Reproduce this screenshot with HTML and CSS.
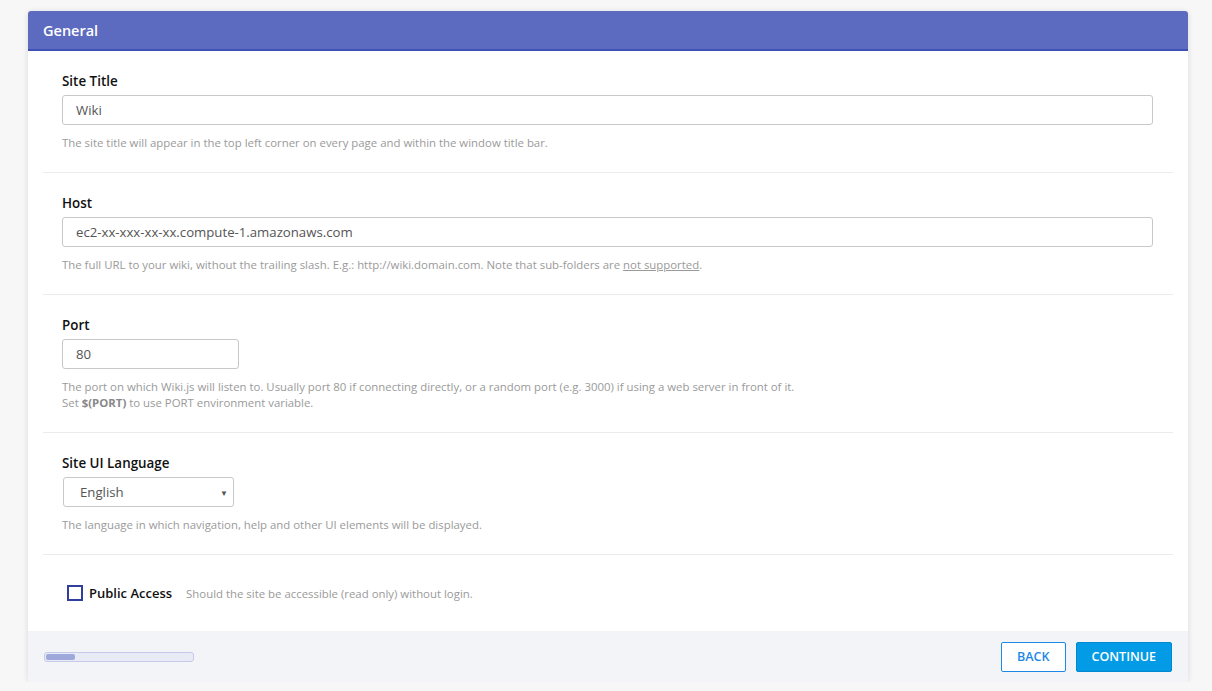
FILE: index.html
```html
<!DOCTYPE html>
<html lang="en">
<head>
    <meta charset="UTF-8">
    <meta name="viewport" content="width=device-width, initial-scale=1.0">
    <title>Wiki.js Setup - General</title>
    <link rel="stylesheet" href="styles.css">
</head>
<body>
    <div class="panel">
        <div class="panel-title">General</div>

        <div class="panel-content">
            <section class="field">
                <label class="field-label">Site Title</label>
                <input class="input" type="text" value="Wiki">
                <p class="help">The site title will appear in the top left corner on every page and within the window title bar.</p>
            </section>

            <section class="field">
                <label class="field-label">Host</label>
                <input class="input" type="text" value="ec2-xx-xxx-xx-xx.compute-1.amazonaws.com">
                <p class="help">The full URL to your wiki, without the trailing slash. E.g.: http://wiki.domain.com. Note that sub-folders are <u>not supported</u>.</p>
            </section>

            <section class="field">
                <label class="field-label">Port</label>
                <input class="input input-small" type="text" value="80">
                <p class="help">The port on which Wiki.js will listen to. Usually port 80 if connecting directly, or a random port (e.g. 3000) if using a web server in front of it.<br>
                Set <strong>$(PORT)</strong> to use PORT environment variable.</p>
            </section>

            <section class="field">
                <label class="field-label">Site UI Language</label>
                <div class="select">
                    <span>English</span>
                    <span class="caret">&#9660;</span>
                </div>
                <p class="help">The language in which navigation, help and other UI elements will be displayed.</p>
            </section>

            <section class="field field-check">
                <span class="checkbox"></span>
                <span class="check-label">Public Access</span>
                <span class="check-help">Should the site be accessible (read only) without login.</span>
            </section>
        </div>

        <div class="panel-footer">
            <div class="progress"><div class="progress-bar" style="width: 20%"></div></div>
            <div class="actions">
                <button class="btn btn-outline">Back</button>
                <button class="btn btn-primary">Continue</button>
            </div>
        </div>
    </div>
</body>
</html>
```

FILE: styles.css
```css
body {
    margin: 0;
    padding: 11px 24px 0 28px;
    background-color: #f7f7f7;
    font-family: "Open Sans", "Noto Sans", Arial, sans-serif;
    color: #222;
}

.panel {
    background-color: white;
    border-radius: 3px;
    box-shadow: 0 1px 6px rgba(0, 0, 0, 0.12);
    overflow: hidden;
}

.panel-title {
    background-color: #5c6bc0;
    border-bottom: 2px solid #3f51b5;
    color: white;
    font-size: 14.5px;
    font-weight: 600;
    height: 38px;
    line-height: 40px;
    padding-left: 15px;
}

.panel-content {
    padding: 0 15px;
}

.field {
    padding: 20px 20px 21px 19px;
    border-bottom: 1px solid #ececec;
}

.field-label {
    display: block;
    font-size: 13.4px;
    font-weight: 600;
    line-height: 20px;
    margin-bottom: 4px;
    color: #111;
}

.input {
    display: block;
    box-sizing: border-box;
    width: 100%;
    height: 30px;
    margin: 0;
    padding: 0 13px;
    border: 1px solid #c8c8c8;
    border-radius: 3px;
    font-family: inherit;
    font-size: 13.2px;
    color: #555;
    background-color: white;
}

.input-small {
    width: 177px;
}

.select {
    display: flex;
    align-items: center;
    justify-content: space-between;
    box-sizing: border-box;
    width: 171px;
    height: 30px;
    margin-left: 1px;
    padding: 0 5px 0 16px;
    border: 1px solid #c8c8c8;
    border-radius: 3px;
    font-size: 13.2px;
    color: #555;
}

.select .caret {
    font-size: 8px;
    color: #555;
}

.help {
    margin: 10px 0 0;
    font-size: 11.4px;
    line-height: 16px;
    color: #9a9a9a;
}

.help strong {
    color: #888;
}

.field-check {
    display: flex;
    align-items: center;
    height: 20px;
    padding: 28px 20px 28px 24px;
    border-bottom: none;
}

.checkbox {
    width: 12px;
    height: 12px;
    border: 2px solid #303f9f;
    margin-right: 6px;
}

.check-label {
    font-size: 13px;
    font-weight: 600;
    color: #111;
    margin-right: 14px;
}

.check-help {
    font-size: 11.4px;
    color: #9a9a9a;
}

.panel-footer {
    display: flex;
    align-items: center;
    justify-content: space-between;
    height: 51px;
    padding: 0 16px;
    background-color: #f3f4f8;
}

.progress {
    width: 146px;
    height: 6px;
    padding: 1px;
    border: 1px solid #c5cae9;
    border-radius: 3px;
    background-color: #e8eaf6;
}

.progress-bar {
    height: 100%;
    background-color: #9fa8da;
    border-radius: 2px;
}

.actions {
    display: flex;
    gap: 10px;
}

.btn {
    height: 30px;
    padding: 0 15px;
    border-radius: 2px;
    font-family: inherit;
    font-size: 12.5px;
    font-weight: 600;
    text-transform: uppercase;
    cursor: pointer;
}

.btn-outline {
    background-color: white;
    border: 1px solid #1e88e5;
    color: #1e88e5;
}

.btn-primary {
    background-color: #039be5;
    border: 1px solid #0288d1;
    color: white;
}
```
